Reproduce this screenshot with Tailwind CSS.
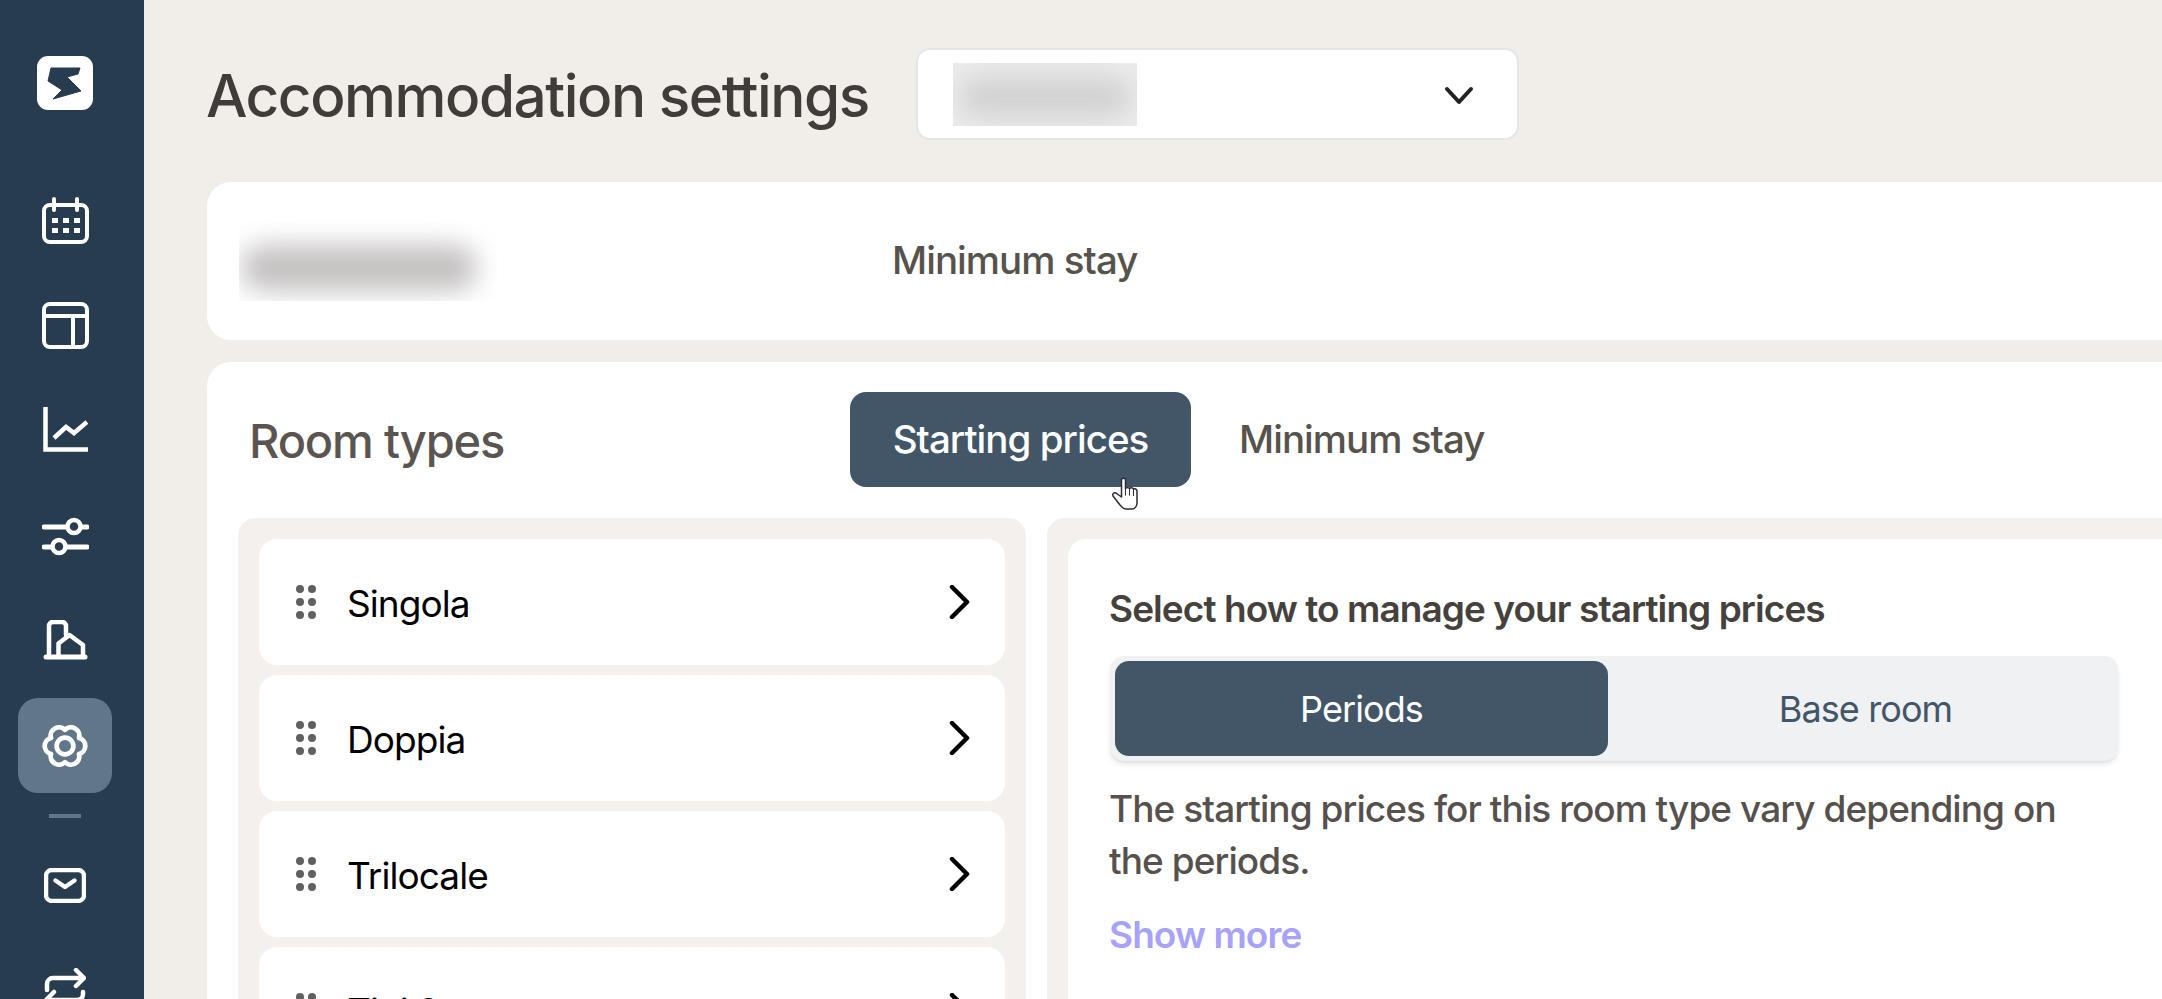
<!DOCTYPE html>
<html>

<head>
    <title>Accommodation settings</title>
    <script src="https://cdn.jsdelivr.net/npm/@tailwindcss/browser@4"></script>
</head>

<body class="bg-[#f1ede9] overflow-hidden h-[999px] font-['Inter',sans-serif]">
    <div class="flex h-[999px] w-[2400px] overflow-hidden">
        <!-- sidebar -->
        <nav class="w-[144px] shrink-0 h-[999px] overflow-hidden bg-[#283c50] flex flex-col items-center pr-[14px] text-white">
            <svg class="mt-[56px] shrink-0" width="56" height="54" viewBox="0 0 56 54">
                <rect width="56" height="54" rx="11" fill="#fff" />
                <path d="M14 12 L43 12 L41 18 L30 21 L44 35 L16 43 L25 34 L11 25 Z" fill="#283c50" stroke="#283c50" stroke-width="1" stroke-linejoin="round" />
            </svg>
            <svg class="mt-[87px] shrink-0" width="47" height="47" viewBox="0 0 47 47" fill="none" stroke="currentColor" stroke-width="4">
                <rect x="2" y="8" width="43" height="37" rx="6" />
                <path d="M12 2v11M35 2v11" stroke-linecap="round" />
                <g fill="currentColor" stroke="none">
                    <rect x="10" y="21" width="6" height="5" /><rect x="21" y="21" width="6" height="5" /><rect x="32" y="21" width="6" height="5" />
                    <rect x="10" y="31" width="6" height="5" /><rect x="21" y="31" width="6" height="5" /><rect x="32" y="31" width="6" height="5" />
                </g>
            </svg>
            <svg class="mt-[58px] shrink-0" width="47" height="47" viewBox="0 0 47 47" fill="none" stroke="currentColor" stroke-width="4">
                <rect x="2" y="2" width="43" height="43" rx="6" />
                <path d="M2 14h43M31 14v31" />
            </svg>
            <svg class="mt-[58px] shrink-0" width="45" height="45" viewBox="0 0 45 45" fill="none" stroke="currentColor" stroke-width="4.5">
                <path d="M2.5 0v42.5h45" />
                <path d="M11 31l12-11 8 6 13-11" />
            </svg>
            <svg class="mt-[65px] shrink-0" width="47" height="39" viewBox="0 0 47 39" fill="none" stroke="currentColor" stroke-width="5" stroke-linecap="round">
                <path d="M2 10h43M2 30h43" />
                <circle cx="32" cy="9.5" r="6.5" fill="#283c50" stroke-width="4.5" />
                <circle cx="17" cy="29.5" r="6.5" fill="#283c50" stroke-width="4.5" />
            </svg>
            <svg class="mt-[64px] shrink-0" width="45" height="40" viewBox="0 0 45 40" fill="none" stroke="currentColor" stroke-width="4.5" stroke-linecap="round" stroke-linejoin="round">
                <path d="M3 37h39" stroke-width="5" />
                <path d="M6 37V6a4 4 0 0 1 4-4h9a4 4 0 0 1 4 4v9" />
                <path d="M15.5 37V23.5l11-8.5 13.5 10v12" />
            </svg>
            <div class="mt-[38px] w-[94px] h-[95px] shrink-0 rounded-[20px] bg-[#62768a] flex items-center justify-center">
                <svg width="46" height="46" viewBox="0 0 44 44" fill="none" stroke="currentColor" stroke-width="4.5" stroke-linejoin="round">
                    <path d="M22 6.5A8 8 0 0 1 35.4 14.25A8 8 0 0 1 35.4 29.75A8 8 0 0 1 22 37.5A8 8 0 0 1 8.6 29.75A8 8 0 0 1 8.6 14.25A8 8 0 0 1 22 6.5Z" />
                    <circle cx="22" cy="22" r="8" />
                </svg>
            </div>
            <div class="mt-[21px] w-[32px] h-[4px] shrink-0 bg-[#62768a]"></div>
            <svg class="mt-[50px] shrink-0" width="42" height="35" viewBox="0 0 42 35" fill="none" stroke="currentColor" stroke-width="4.5" stroke-linecap="round" stroke-linejoin="round">
                <rect x="2" y="2" width="38" height="31" rx="6" />
                <path d="M11.5 12.5l9.5 6.5 9.5-6.5" />
            </svg>
            <svg class="mt-[65px] shrink-0" width="42" height="42" viewBox="0 0 42 42" fill="none" stroke="currentColor" stroke-width="4.5" stroke-linecap="round" stroke-linejoin="round">
                <path d="M3 22v-6a6 6 0 0 1 6-6h30M32 2l8 8-8 8" />
                <path d="M39 24v2a6 6 0 0 1-6 6H3M10 24l-8 8 8 8" />
            </svg>
        </nav>

        <!-- main -->
        <main class="pl-[63px] flex-1 flex flex-col">
            <div class="flex items-center shrink-0 h-[92px] mt-[48px]">
                <h1 class="w-[709px] pt-[4px] -ml-[1px] text-[58.5px] font-medium tracking-tight text-[#403c39]">Accommodation settings</h1>
                <div class="ml-[1px] w-[603px] h-[92px] bg-white border-2 border-[#e2e6e8] rounded-[14px] flex items-center justify-between pl-[35px] pr-[43px]">
                    <div class="w-[184px] h-[63px] overflow-hidden bg-[#ebebeb]">
                        <div class="w-[170px] h-[40px] mt-[14px] ml-[7px] bg-[#d2d2d2] rounded-full blur-[12px]"></div>
                    </div>
                    <svg class="mt-[4px]" width="30" height="20" viewBox="0 0 30 20" fill="none" stroke="#222" stroke-width="4" stroke-linecap="round" stroke-linejoin="round">
                        <path d="M3 3l12 13L27 3" />
                    </svg>
                </div>
            </div>

            <section class="mt-[42px] h-[158px] shrink-0 bg-white rounded-[24px] flex items-center pl-[32px]">
                <div class="w-[258px] h-[80px] overflow-hidden">
                    <div class="w-[236px] h-[46px] mt-[24px] ml-[2px] bg-[#c4c1c1] rounded-full blur-[13px]"></div>
                </div>
                <span class="ml-[395px] text-[38.5px] font-medium tracking-tight text-[#56524c]">Minimum stay</span>
            </section>

            <section class="mt-[22px] bg-white rounded-[24px] h-[700px] shrink-0 pl-[31px]">
                <div class="flex items-center h-[95px] mt-[30px]">
                    <h2 class="pl-[11px] pt-[4px] w-[612px] text-[47px] font-medium tracking-tight text-[#5a5550]">Room types</h2>
                    <button class="w-[341px] h-[95px] rounded-[16px] bg-[#425667] text-white text-[38.5px] font-medium tracking-tight">Starting prices</button>
                    <span class="ml-[48px] text-[38.5px] font-medium tracking-tight text-[#56524c]">Minimum stay</span>
                </div>

                <div class="flex gap-[21px] mt-[31px]">
                    <div class="w-[788px] h-[600px] bg-[#f3f0ed] rounded-[18px] px-[21px] pt-[21px] flex flex-col gap-[10px]">
                        <div class="h-[126px] shrink-0 bg-white rounded-[18px] flex items-center pl-[37px] pr-[35px]">
                            <svg width="20" height="34" viewBox="0 0 20 34" fill="#5f5f5f"><circle cx="4" cy="4" r="4" /><circle cx="16" cy="4" r="4" /><circle cx="4" cy="17" r="4" /><circle cx="16" cy="17" r="4" /><circle cx="4" cy="30" r="4" /><circle cx="16" cy="30" r="4" /></svg>
                            <span class="ml-[31px] pt-[4px] flex-1 text-[37px] tracking-tight text-black">Singola</span>
                            <svg width="21" height="34" viewBox="0 0 21 34" fill="none" stroke="#000" stroke-width="4.5" stroke-linecap="round" stroke-linejoin="round"><path d="M3 2l15 15L3 32" /></svg>
                        </div>
                        <div class="h-[126px] shrink-0 bg-white rounded-[18px] flex items-center pl-[37px] pr-[35px]">
                            <svg width="20" height="34" viewBox="0 0 20 34" fill="#5f5f5f"><circle cx="4" cy="4" r="4" /><circle cx="16" cy="4" r="4" /><circle cx="4" cy="17" r="4" /><circle cx="16" cy="17" r="4" /><circle cx="4" cy="30" r="4" /><circle cx="16" cy="30" r="4" /></svg>
                            <span class="ml-[31px] pt-[4px] flex-1 text-[37px] tracking-tight text-black">Doppia</span>
                            <svg width="21" height="34" viewBox="0 0 21 34" fill="none" stroke="#000" stroke-width="4.5" stroke-linecap="round" stroke-linejoin="round"><path d="M3 2l15 15L3 32" /></svg>
                        </div>
                        <div class="h-[126px] shrink-0 bg-white rounded-[18px] flex items-center pl-[37px] pr-[35px]">
                            <svg width="20" height="34" viewBox="0 0 20 34" fill="#5f5f5f"><circle cx="4" cy="4" r="4" /><circle cx="16" cy="4" r="4" /><circle cx="4" cy="17" r="4" /><circle cx="16" cy="17" r="4" /><circle cx="4" cy="30" r="4" /><circle cx="16" cy="30" r="4" /></svg>
                            <span class="ml-[31px] pt-[4px] flex-1 text-[37px] tracking-tight text-black">Trilocale</span>
                            <svg width="21" height="34" viewBox="0 0 21 34" fill="none" stroke="#000" stroke-width="4.5" stroke-linecap="round" stroke-linejoin="round"><path d="M3 2l15 15L3 32" /></svg>
                        </div>
                        <div class="h-[126px] shrink-0 bg-white rounded-[18px] flex items-center pl-[37px] pr-[35px]">
                            <svg width="20" height="34" viewBox="0 0 20 34" fill="#5f5f5f"><circle cx="4" cy="4" r="4" /><circle cx="16" cy="4" r="4" /><circle cx="4" cy="17" r="4" /><circle cx="16" cy="17" r="4" /><circle cx="4" cy="30" r="4" /><circle cx="16" cy="30" r="4" /></svg>
                            <span class="ml-[31px] pt-[4px] flex-1 text-[37px] tracking-tight text-black">Tipi 2</span>
                            <svg width="21" height="34" viewBox="0 0 21 34" fill="none" stroke="#000" stroke-width="4.5" stroke-linecap="round" stroke-linejoin="round"><path d="M3 2l15 15L3 32" /></svg>
                        </div>
                    </div>

                    <div class="w-[1150px] h-[600px] bg-[#f3f0ed] rounded-[18px] pl-[21px] pt-[21px]">
                        <div class="h-[600px] bg-white rounded-[18px] pl-[41px] pt-[52px]">
                            <h3 class="text-[37px] leading-[36px] font-semibold tracking-tight text-[#45413d]">Select how to manage your starting prices</h3>
                            <div class="mt-[29px] ml-[1px] w-[1008px] h-[105px] p-[5px] bg-[#f0f1f3] rounded-[14px] shadow-md flex">
                                <div class="w-[493px] bg-[#425667] rounded-[14px] flex items-center justify-center text-white text-[36px] tracking-tight">Periods</div>
                                <div class="flex-1 pl-[10px] flex items-center justify-center text-[#425667] text-[36px] tracking-tight">Base room</div>
                            </div>
                            <p class="mt-[22px] w-[1000px] text-[37px] leading-[52px] font-medium tracking-tight text-[#56514d]">The starting prices for this room type vary depending on the periods.</p>
                            <a class="block mt-[26px] text-[37px] leading-[44px] font-semibold tracking-tight text-[#a8a2fa]">Show more</a>
                        </div>
                    </div>
                </div>
            </section>
        </main>
    </div>

    <!-- hand cursor over the tab -->
    <svg class="absolute left-[1104px] top-[477px]" width="36" height="36" viewBox="0 0 36 36" fill="#fff" stroke="#2a2a3a" stroke-width="1.5" stroke-linejoin="round">
        <path d="M17.5 3c0-2.5 4-2.5 4 0v8.5c1-1 3-1 4 0 1-1 3-1 4 .5 1-.5 3.5 0 3.5 2v12c0 3-2 6-5 6h-6c-3 0-4-2-6-4l-7-9c-1-2 1-4 3-3l5.5 4z" />
        <path d="M21.5 11.5v7M25.5 11.5v7M29.5 12v7" fill="none" stroke-width="1" />
    </svg>
</body>

</html>
